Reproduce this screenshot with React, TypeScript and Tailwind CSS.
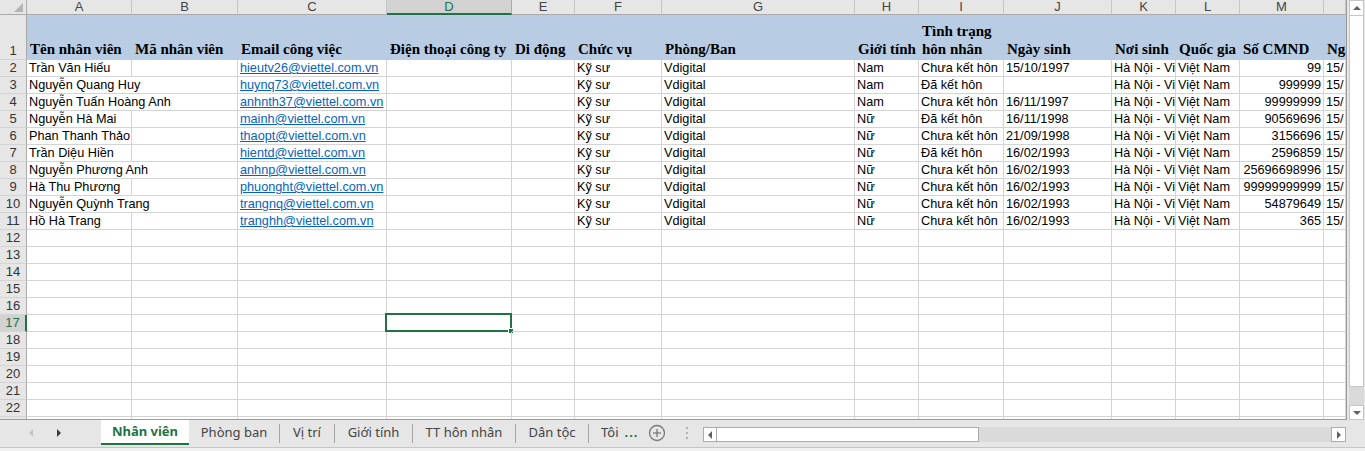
import React from "react";

const W = [
  "w-[105px]",
  "w-[106px]",
  "w-[149px]",
  "w-[125px]",
  "w-[63px]",
  "w-[87px]",
  "w-[193px]",
  "w-[64px]",
  "w-[85px]",
  "w-[108px]",
  "w-[64px]",
  "w-[64px]",
  "w-[84px]",
  "w-[22px]",
];
const LETTERS = ["A", "B", "C", "D", "E", "F", "G", "H", "I", "J", "K", "L", "M", ""];

const HEAD: React.ReactNode[] = [
  "Tên nhân viên",
  "Mã nhân viên",
  "Email công việc",
  "Điện thoại công ty",
  "Di động",
  "Chức vụ",
  "Phòng/Ban",
  "Giới tính",
  <>
    Tình trạng
    <br />
    hôn nhân
  </>,
  "Ngày sinh",
  "Nơi sinh",
  "Quốc gia",
  "Số CMND",
  "Ngày cấp",
];

const DATA: { name: string; email: string; g: string; m: string; dob: string; id: string; ov?: boolean }[] = [
  { name: "Trần Văn Hiếu", email: "hieutv26@viettel.com.vn", g: "Nam", m: "Chưa kết hôn", dob: "15/10/1997", id: "99" },
  { name: "Nguyễn Quang Huy", email: "huynq73@viettel.com.vn", g: "Nam", m: "Đã kết hôn", dob: "", id: "999999", ov: true },
  { name: "Nguyễn Tuấn Hoàng Anh", email: "anhnth37@viettel.com.vn", g: "Nam", m: "Chưa kết hôn", dob: "16/11/1997", id: "99999999", ov: true },
  { name: "Nguyễn Hà Mai", email: "mainh@viettel.com.vn", g: "Nữ", m: "Đã kết hôn", dob: "16/11/1998", id: "90569696" },
  { name: "Phan Thanh Thảo", email: "thaopt@viettel.com.vn", g: "Nữ", m: "Chưa kết hôn", dob: "21/09/1998", id: "3156696" },
  { name: "Trần Diệu Hiền", email: "hientd@viettel.com.vn", g: "Nữ", m: "Đã kết hôn", dob: "16/02/1993", id: "2596859" },
  { name: "Nguyễn Phương Anh", email: "anhnp@viettel.com.vn", g: "Nữ", m: "Chưa kết hôn", dob: "16/02/1993", id: "25696698996", ov: true },
  { name: "Hà Thu Phương", email: "phuonght@viettel.com.vn", g: "Nữ", m: "Chưa kết hôn", dob: "16/02/1993", id: "99999999999" },
  { name: "Nguyễn Quỳnh Trang", email: "trangnq@viettel.com.vn", g: "Nữ", m: "Chưa kết hôn", dob: "16/02/1993", id: "54879649", ov: true },
  { name: "Hồ Hà Trang", email: "tranghh@viettel.com.vn", g: "Nữ", m: "Chưa kết hôn", dob: "16/02/1993", id: "365" },
];

const cellBase =
  "h-[17px] shrink-0 border-b border-[#d4d4d4] whitespace-nowrap pl-[2px] leading-[16px] text-[12.7px] text-black";

function RowHeader({ n, selected, h = "h-[17px]" }: { n: string; selected?: boolean; h?: string }) {
  return (
    <div
      className={
        "w-[27px] shrink-0 flex items-end justify-center border-b border-[#d4d4d4] text-[13px] leading-[16px] " +
        h +
        (selected
          ? " bg-[#d2d2d2] text-[#217346] border-r-2 border-r-[#217346]"
          : " bg-[#e6e6e6] text-[#333] border-r border-r-[#ababab]")
      }
    >
      {n}
    </div>
  );
}

function DataRow({ r, idx }: { r: (typeof DATA)[number]; idx: number }) {
  const vals: string[] = [r.name, "", r.email, "", "", "Kỹ sư", "Vdigital", r.g, r.m, r.dob, "Hà Nội - Việt Nam", "Việt Nam", r.id, "15/"];
  return (
    <div className="flex">
      <RowHeader n={String(idx + 2)} />
      {vals.map((v, i) => {
        const noBorder = i === 0 && r.ov;
        const cls =
          cellBase +
          " " +
          W[i] +
          (noBorder ? " overflow-visible" : " overflow-hidden border-r border-r-[#d4d4d4]") +
          (i === 12 ? " text-right pr-[2px] pl-0" : "");
        return (
          <div key={i} className={cls}>
            {i === 2 ? <span className="text-[#0563c1] underline">{v}</span> : v}
          </div>
        );
      })}
    </div>
  );
}

function EmptyRow({ n }: { n: number }) {
  return (
    <div className="flex">
      <RowHeader n={String(n)} selected={n === 17} />
      {W.map((w, i) => (
        <div key={i} className={cellBase + " " + w + " border-r border-r-[#d4d4d4] relative"}>
          {n === 17 && i === 3 ? (
            <div className="absolute left-[-2px] top-[-2px] w-[127px] h-[19px] border-2 border-[#217346]">
              <div className="absolute right-[-4px] bottom-[-4px] w-[6px] h-[6px] bg-[#217346] border border-white" />
            </div>
          ) : null}
        </div>
      ))}
    </div>
  );
}

function Tri({ dir, color = "#606060" }: { dir: "up" | "down" | "left" | "right"; color?: string }) {
  const pts =
    dir === "up" ? "0,4 4,0 8,4" : dir === "down" ? "0,0 8,0 4,4" : dir === "left" ? "4,0 4,8 0,4" : "0,0 0,8 4,4";
  const w = dir === "up" || dir === "down" ? 8 : 4;
  const h = dir === "up" || dir === "down" ? 4 : 8;
  return (
    <svg width={w} height={h} viewBox={`0 0 ${w} ${h}`}>
      <polygon points={pts} fill={color} />
    </svg>
  );
}

export default function App() {
  const empties = [];
  for (let n = 12; n <= 23; n++) empties.push(<EmptyRow key={n} n={n} />);
  return (
    <div
      className="w-[1365px] h-[451px] overflow-hidden bg-[#e6e6e6] flex flex-col"
      style={{ fontFamily: '"Liberation Sans", Arial, sans-serif' }}
    >
      <div className="flex h-[420px] shrink-0">
        <div className="w-[1347px] h-[420px] overflow-hidden bg-white border-r border-b border-[#9b9b9b] shrink-0">
          {/* column letters */}
          <div className="flex h-[15px]">
            <div className="w-[27px] h-[15px] shrink-0 bg-[#e6e6e6] border-r border-b border-[#ababab] flex items-end justify-end pr-[3px] pb-[2px]">
              <svg width="9" height="9" viewBox="0 0 9 9">
                <polygon points="9,0 9,9 0,9" fill="#b4b4b4" />
              </svg>
            </div>
            {LETTERS.map((l, i) => (
              <div
                key={i}
                className={
                  "h-[15px] shrink-0 flex items-center justify-center text-[13px] leading-[14px] border-r " +
                  W[i] +
                  (i === 3
                    ? " bg-[#d2d2d2] text-[#217346] border-b-2 border-b-[#217346] border-r-[#ababab]"
                    : " bg-[#e6e6e6] text-[#444] border-b border-b-[#ababab] border-r-[#c6c6c6]")
                }
              >
                {l}
              </div>
            ))}
          </div>
          {/* header row 1 */}
          <div className="flex h-[45px]">
            <RowHeader n="1" h="h-[45px]" />
            {HEAD.map((t, i) => (
              <div
                key={i}
                className={
                  "h-[45px] shrink-0 bg-[#b8cce4] flex items-end pl-[3px] pb-[2px] overflow-hidden whitespace-nowrap font-bold text-[15px] leading-[18px] text-black " +
                  W[i]
                }
                style={{ fontFamily: '"Liberation Serif", "Times New Roman", serif' }}
              >
                <div>{t}</div>
              </div>
            ))}
          </div>
          {DATA.map((r, i) => (
            <DataRow key={i} r={r} idx={i} />
          ))}
          {empties}
        </div>
        <div className="w-[2px] shrink-0" />
        {/* vertical scrollbar */}
        <div className="w-[15px] shrink-0 flex flex-col h-[420px]">
          <div className="h-[16px] bg-white border border-[#c6c6c6] flex items-center justify-center">
            <Tri dir="up" />
          </div>
          <div className="h-[371px] bg-white border border-t-0 border-[#c6c6c6]" />
          <div className="flex-1 bg-[#dadada]" />
          <div className="h-[15px] bg-white border border-[#c6c6c6] flex items-center justify-center">
            <Tri dir="down" />
          </div>
        </div>
      </div>
      {/* sheet tabs bar */}
      <div className="h-[31px] shrink-0 flex flex-col" style={{ fontFamily: '"Noto Sans", "Open Sans", sans-serif' }}>
        <div className="h-[28px] flex items-start border-b border-[#c6c6c6]">
          <div className="w-[101px] h-[25px] shrink-0 flex items-center">
            <div className="ml-[29px]">
              <Tri dir="left" color="#c3c3c3" />
            </div>
            <div className="ml-[24px]">
              <Tri dir="right" color="#3b3b3b" />
            </div>
          </div>
          <div className="w-[88px] h-[25px] shrink-0 bg-white border-b-2 border-[#217346] flex items-center justify-center font-bold text-[13px] text-[#217346]">
            Nhân viên
          </div>
          <div className="w-[90px] h-[25px] shrink-0 flex items-center justify-center text-[13px] text-[#444]">Phòng ban</div>
          <div className="w-px h-[19px] mt-[4px] bg-[#a6a6a6] shrink-0" />
          <div className="w-[54px] h-[25px] shrink-0 flex items-center justify-center text-[13px] text-[#444]">Vị trí</div>
          <div className="w-px h-[19px] mt-[4px] bg-[#a6a6a6] shrink-0" />
          <div className="w-[77px] h-[25px] shrink-0 flex items-center justify-center text-[13px] text-[#444]">Giới tính</div>
          <div className="w-px h-[19px] mt-[4px] bg-[#a6a6a6] shrink-0" />
          <div className="w-[102px] h-[25px] shrink-0 flex items-center justify-center text-[13px] text-[#444]">TT hôn nhân</div>
          <div className="w-px h-[19px] mt-[4px] bg-[#a6a6a6] shrink-0" />
          <div className="w-[72px] h-[25px] shrink-0 flex items-center justify-center text-[13px] text-[#444]">Dân tộc</div>
          <div className="w-px h-[19px] mt-[4px] bg-[#a6a6a6] shrink-0" />
          <div className="w-[57px] h-[25px] shrink-0 flex items-center pl-[12px] text-[13px] text-[#444]">
            <span>Tôi</span>
            <span className="ml-[6px] font-bold text-[#217346] tracking-[1px]">...</span>
          </div>
          <div className="h-[25px] shrink-0 flex items-center ml-[2px]">
            <svg width="18" height="18" viewBox="0 0 18 18">
              <circle cx="9" cy="9" r="7.5" fill="none" stroke="#7a7a7a" strokeWidth="1.3" />
              <line x1="9" y1="5" x2="9" y2="13" stroke="#7a7a7a" strokeWidth="1.3" />
              <line x1="5" y1="9" x2="13" y2="9" stroke="#7a7a7a" strokeWidth="1.3" />
            </svg>
          </div>
          <div className="h-[25px] shrink-0 flex flex-col justify-center gap-[3px] ml-[20px]">
            <div className="w-[2px] h-[2px] bg-[#b0b0b0]" />
            <div className="w-[2px] h-[2px] bg-[#b0b0b0]" />
            <div className="w-[2px] h-[2px] bg-[#b0b0b0]" />
          </div>
          {/* horizontal scrollbar */}
          <div className="ml-[15px] mt-[7px] w-[643px] h-[15px] flex bg-[#dadada] shrink-0">
            <div className="w-[14px] h-[15px] bg-white border border-[#ababab] flex items-center justify-center">
              <Tri dir="left" color="#606060" />
            </div>
            <div className="w-[262px] h-[15px] bg-white border border-l-0 border-[#ababab]" />
            <div className="flex-1" />
            <div className="w-[15px] h-[15px] bg-white border border-[#ababab] flex items-center justify-center">
              <Tri dir="right" color="#606060" />
            </div>
          </div>
        </div>
        <div className="flex-1 bg-[#f0f0f0]" />
      </div>
    </div>
  );
}
